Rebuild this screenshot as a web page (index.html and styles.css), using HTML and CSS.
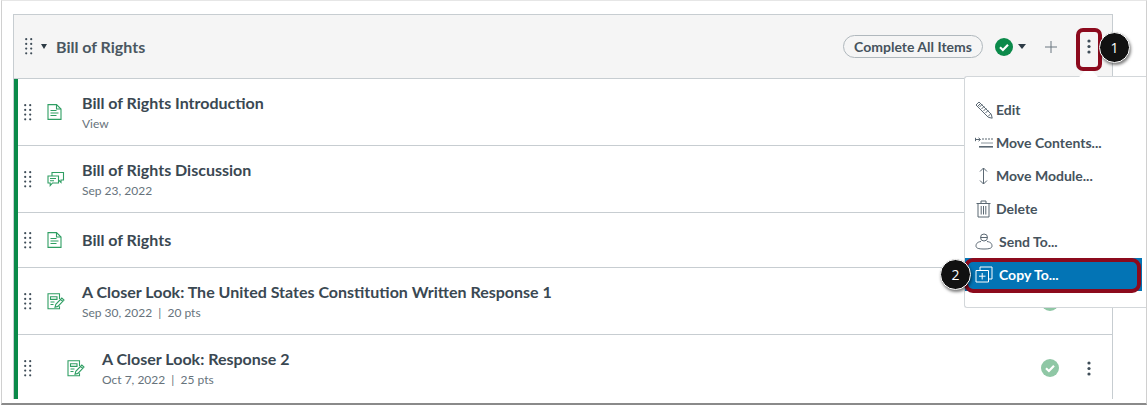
FILE: index.html
```html
<!DOCTYPE html>
<html lang="en">
<head>
    <meta charset="UTF-8">
    <meta name="viewport" content="width=device-width, initial-scale=1.0">
    <title>Copy Module</title>
    <link rel="stylesheet" href="styles.css">
</head>
<body>
    <svg class="defs" width="0" height="0">
        <defs>
            <g id="grip" fill="#3f4d58">
                <circle cx="1.2" cy="1.2" r="1.1"/><circle cx="6.2" cy="1.2" r="1.1"/>
                <circle cx="1.2" cy="5.9" r="1.1"/><circle cx="6.2" cy="5.9" r="1.1"/>
                <circle cx="1.2" cy="10.6" r="1.1"/><circle cx="6.2" cy="10.6" r="1.1"/>
                <circle cx="1.2" cy="15.3" r="1.1"/><circle cx="6.2" cy="15.3" r="1.1"/>
            </g>
            <g id="page" fill="none" stroke="#2f9e63" stroke-width="1.1">
                <path d="M1 .6h8.500L14 5v10.400H1z"/>
                <path d="M9.500 .6V5H14"/>
                <path d="M3.500 6.500h6M3.500 9h8M3.500 11.500h6"/>
            </g>
            <g id="assignment" fill="none" stroke="#2f9e63" stroke-width="1.1">
                <path d="M12.500 6V.8H1v15h11.500v-2.500"/>
                <path d="M3.500 3.800h6.500v2.600H3.500zM3.500 9h4M3.500 11.500h3"/>
                <path d="M8 14.300l.8-3 6-6.300 2.200 2.100-6.100 6.300zM13.500 6.300l2.200 2.100"/>
            </g>
            <g id="kebab" fill="#3f4d58">
                <circle cx="2" cy="2" r="1.600"/><circle cx="2" cy="7.500" r="1.600"/><circle cx="2" cy="13" r="1.600"/>
            </g>
        </defs>
    </svg>

    <div class="frame">
        <section class="module">
            <header class="module-head">
                <svg class="grip-head" width="8" height="17"><use href="#grip"/></svg>
                <span class="caret caret-head"></span>
                <h2>Bill of Rights</h2>
                <div class="head-actions">
                    <span class="pill">Complete All Items</span>
                    <svg class="status" width="18" height="18" viewBox="0 0 18 18">
                        <circle cx="9" cy="9" r="9" fill="#0b8a4a"/>
                        <path d="M5 9.300l2.900 2.700L13 6.800" fill="none" stroke="#fff" stroke-width="2.200"/>
                    </svg>
                    <span class="caret caret-status"></span>
                    <svg class="plus" width="12" height="12" viewBox="0 0 12 12">
                        <path d="M6 0v12M0 6h12" stroke="#6b7780" stroke-width="1"/>
                    </svg>
                    <svg class="kebab-head" width="4" height="15"><use href="#kebab"/></svg>
                </div>
            </header>

            <ul class="items">
                <li class="item tall">
                    <svg class="grip" width="8" height="17"><use href="#grip"/></svg>
                    <svg class="type" width="18" height="17"><use href="#page"/></svg>
                    <div>
                        <div class="title">Bill of Rights Introduction</div>
                        <div class="meta">View</div>
                    </div>
                </li>
                <li class="item tall">
                    <svg class="grip" width="8" height="17"><use href="#grip"/></svg>
                    <svg class="type" width="18" height="17" viewBox="0 0 18 17" fill="none" stroke="#2f9e63" stroke-width="1.100">
                        <path d="M1 5h10.500v7H5.500l-2.300 2.600V12H1z"/>
                        <path d="M5 5V1.500h11.500V9H14v2.500L11.500 9"/>
                        <path d="M3 7.500h6M3 9.800h4"/>
                    </svg>
                    <div>
                        <div class="title">Bill of Rights Discussion</div>
                        <div class="meta">Sep 23, 2022</div>
                    </div>
                </li>
                <li class="item short">
                    <svg class="grip" width="8" height="17"><use href="#grip"/></svg>
                    <svg class="type" width="18" height="17"><use href="#page"/></svg>
                    <div>
                        <div class="title">Bill of Rights</div>
                    </div>
                </li>
                <li class="item tall">
                    <svg class="grip" width="8" height="17"><use href="#grip"/></svg>
                    <svg class="type" width="18" height="17"><use href="#assignment"/></svg>
                    <div>
                        <div class="title">A Closer Look: The United States Constitution Written Response 1</div>
                        <div class="meta">Sep 30, 2022 &nbsp;|&nbsp; 20 pts</div>
                    </div>
                </li>
                <li class="item tall last indent">
                    <svg class="grip" width="8" height="17"><use href="#grip"/></svg>
                    <svg class="type" width="18" height="17"><use href="#assignment"/></svg>
                    <div>
                        <div class="title">A Closer Look: Response 2</div>
                        <div class="meta">Oct 7, 2022 &nbsp;|&nbsp; 25 pts</div>
                    </div>
                    <div class="item-actions">
                        <svg width="18" height="18" viewBox="0 0 18 18">
                            <circle cx="9" cy="9" r="9" fill="#8fc7a5"/>
                            <path d="M5 9.300l2.900 2.700L13 6.800" fill="none" stroke="#fff" stroke-width="2.200"/>
                        </svg>
                        <svg class="kebab-item" width="4" height="15"><use href="#kebab"/></svg>
                    </div>
                </li>
            </ul>
        </section>
    </div>

    <!-- menu and callouts sit over the module -->
    <span class="peek-check"></span>
    <span class="menu-arrow"></span>
    <nav class="menu">
        <a class="menu-item">
            <svg width="18" height="18" viewBox="0 0 18 18" fill="none" stroke="#5b6873" stroke-width="1">
                <path d="M1 4L4 1l12.300 12.300.9 3.900-3.900-.9z"/>
                <path d="M2.500 5.500l3-3M4.500 6l2.800-2.800M6.500 8l2.800-2.800M8.500 10l2.800-2.800M10.500 12l2.800-2.800M13 15.500l2.700-2.700"/>
            </svg>
            Edit
        </a>
        <a class="menu-item">
            <svg width="18" height="11" viewBox="0 0 18 11" fill="none" stroke="#5b6873" stroke-width="1">
                <path d="M0 2.500h5M3.500 .8l2 1.700-2 1.700M.5 .8v3.400"/>
                <path d="M7 2h11" stroke-dasharray="2 1"/>
                <path d="M6 6h12" stroke="#8a949b"/>
                <path d="M4 9.800h14" stroke-width="1.600"/>
            </svg>
            Move Contents...
        </a>
        <a class="menu-item">
            <svg width="18" height="18" viewBox="0 0 18 18" fill="none" stroke="#5b6873" stroke-width="1">
                <path d="M8.500 1v16M5 4.500L8.500 1 12 4.500M5 13.500L8.500 17l3.500-3.500"/>
            </svg>
            Move Module...
        </a>
        <a class="menu-item">
            <svg width="18" height="18" viewBox="0 0 18 18" fill="none" stroke="#5b6873" stroke-width="1">
                <path d="M1.500 3.500h14M6 3.500V1h5v2.500M3 3.500V17h11V3.500M6.200 6v8.500M8.500 6v8.500M10.800 6v8.500"/>
            </svg>
            Delete
        </a>
        <a class="menu-item send">
            <svg width="18" height="17" viewBox="0 0 18 17" fill="none" stroke="#5b6873" stroke-width="1">
                <circle cx="9" cy="4.500" r="3.500"/>
                <path d="M5.500 4.500h7"/>
                <path d="M6 8.500C2 9 1 11 1 13c0 2 2 3 8 3s8-1 8-3c0-2-1-4-5-4.500"/>
            </svg>
            Send To...
        </a>
        <a class="menu-item send active">
            <svg width="18" height="17" viewBox="0 0 18 17" fill="none" stroke="#fff" stroke-width="1">
                <path d="M5 4V1h12v12h-3"/>
                <path d="M1 4.500h12.500V16H1zM7.200 7v6.500M4 10.200h6.500"/>
            </svg>
            Copy To...
        </a>
    </nav>
    <span class="mark mark-kebab"></span>
    <span class="mark mark-copy"></span>
    <span class="callout callout-1">1</span>
    <span class="callout callout-2">2</span>
</body>
</html>
```

FILE: styles.css
```css
* {
    box-sizing: border-box;
}
body {
    margin: 0;
    height: 407px;
    background: #fff;
    font-family: Lato, "Open Sans", sans-serif;
    color: #2d3b45;
    overflow: hidden;
    position: relative;
}
.defs {
    position: absolute;
}
.frame {
    width: 1146px;
    height: 405px;
    margin-left: 1px;
    padding: 13px 33px 0 11px;
    border: 1px solid #d0d0d0;
    border-top-color: #e6e6e6;
    border-bottom: 2px solid #8a8a8a;
}
.module {
    border: 1px solid #c7cdd1;
    border-bottom: 0;
    height: 385px;
}
.module-head {
    height: 64px;
    background: #f5f5f5;
    border-bottom: 1px solid #c7cdd1;
    display: flex;
    align-items: center;
    padding-left: 11px;
}
.grip-head {
    margin-right: 8px;
}
.caret {
    width: 0;
    height: 0;
    border-style: solid;
    border-color: #2d3b45 transparent transparent;
}
.caret-head {
    border-width: 5px 3.500px 0;
    margin-right: 9px;
}
h2 {
    margin: 0;
    font-size: 16px;
    font-weight: 700;
    color: #4a5761;
}
.head-actions {
    margin-left: auto;
    display: flex;
    align-items: center;
}
.pill {
    height: 23px;
    width: 140px;
    border: 1px solid #b0b8bd;
    border-radius: 12px;
    font-size: 14px;
    font-weight: 700;
    line-height: 21px;
    text-align: center;
    color: #46535d;
    margin-right: 12px;
}
.caret-status {
    border-width: 5px 4px 0;
    margin: 0 19px 0 5px;
}
.plus {
    margin-right: 30px;
}
.kebab-head {
    margin-right: 21px;
}
.items {
    list-style: none;
    margin: 0;
    padding: 0;
    border-left: 4px solid #0b8a4a;
}
.item {
    display: flex;
    align-items: center;
    border-bottom: 1px solid #c7cdd1;
    padding-left: 6px;
}
.item.tall {
    height: 67px;
}
.item.short {
    height: 55px;
}
.item.last {
    border-bottom: 0;
    height: 64px;
    padding-top: 2px;
}
.grip {
    margin-right: 15px;
}
.type {
    margin-right: 17px;
}
.item.indent .type {
    margin-left: 20px;
}
.title {
    font-size: 16px;
    font-weight: 700;
    line-height: 20px;
    color: #3a4852;
}
.meta {
    font-size: 12px;
    line-height: 16px;
    margin-top: 3px;
    color: #67737c;
}
.item-actions {
    margin-left: auto;
    display: flex;
    align-items: center;
    margin-right: 21px;
}
.kebab-item {
    margin-left: 28px;
}

/* overlay */
.peek-check {
    position: absolute;
    left: 1041px;
    top: 293px;
    width: 18px;
    height: 18px;
    border-radius: 50%;
    background: #8fc7a5;
}
.menu {
    position: absolute;
    left: 964px;
    top: 76px;
    width: 182px;
    height: 232px;
    padding-top: 16px;
    background: #fff;
    border: 1px solid #d3d7da;
    border-right: 0;
    border-radius: 3px 0 0 3px;
}
.menu-arrow {
    position: absolute;
    left: 1082px;
    top: 70px;
    width: 13px;
    height: 13px;
    background: #fff;
    transform: rotate(45deg);
    z-index: 1;
}
.menu-item {
    height: 33px;
    width: 177px;
    display: flex;
    align-items: center;
    gap: 3px;
    padding-left: 10px;
    font-size: 14px;
    font-weight: 700;
    color: #46535d;
}
.menu-item.send {
    gap: 6px;
}
.menu-item.active {
    background: #0374b5;
    color: #fff;
}
.mark {
    position: absolute;
    border: 4px solid #8c0a1d;
    z-index: 2;
}
.mark-kebab {
    left: 1076px;
    top: 28px;
    width: 26px;
    height: 43px;
    border-radius: 7px;
}
.mark-copy {
    left: 964px;
    top: 258px;
    width: 177px;
    height: 35px;
    border-radius: 9px;
}
.callout {
    position: absolute;
    width: 31px;
    height: 31px;
    border-radius: 50%;
    background: #111;
    border: 1px solid #fff;
    box-shadow: 1px 2px 3px rgba(0, 0, 0, 0.5);
    color: #fff;
    font-family: "Open Sans", sans-serif;
    font-size: 14px;
    line-height: 29px;
    text-align: center;
    z-index: 3;
}
.callout-1 {
    left: 1099px;
    top: 32px;
}
.callout-2 {
    left: 940px;
    top: 259px;
}
```
